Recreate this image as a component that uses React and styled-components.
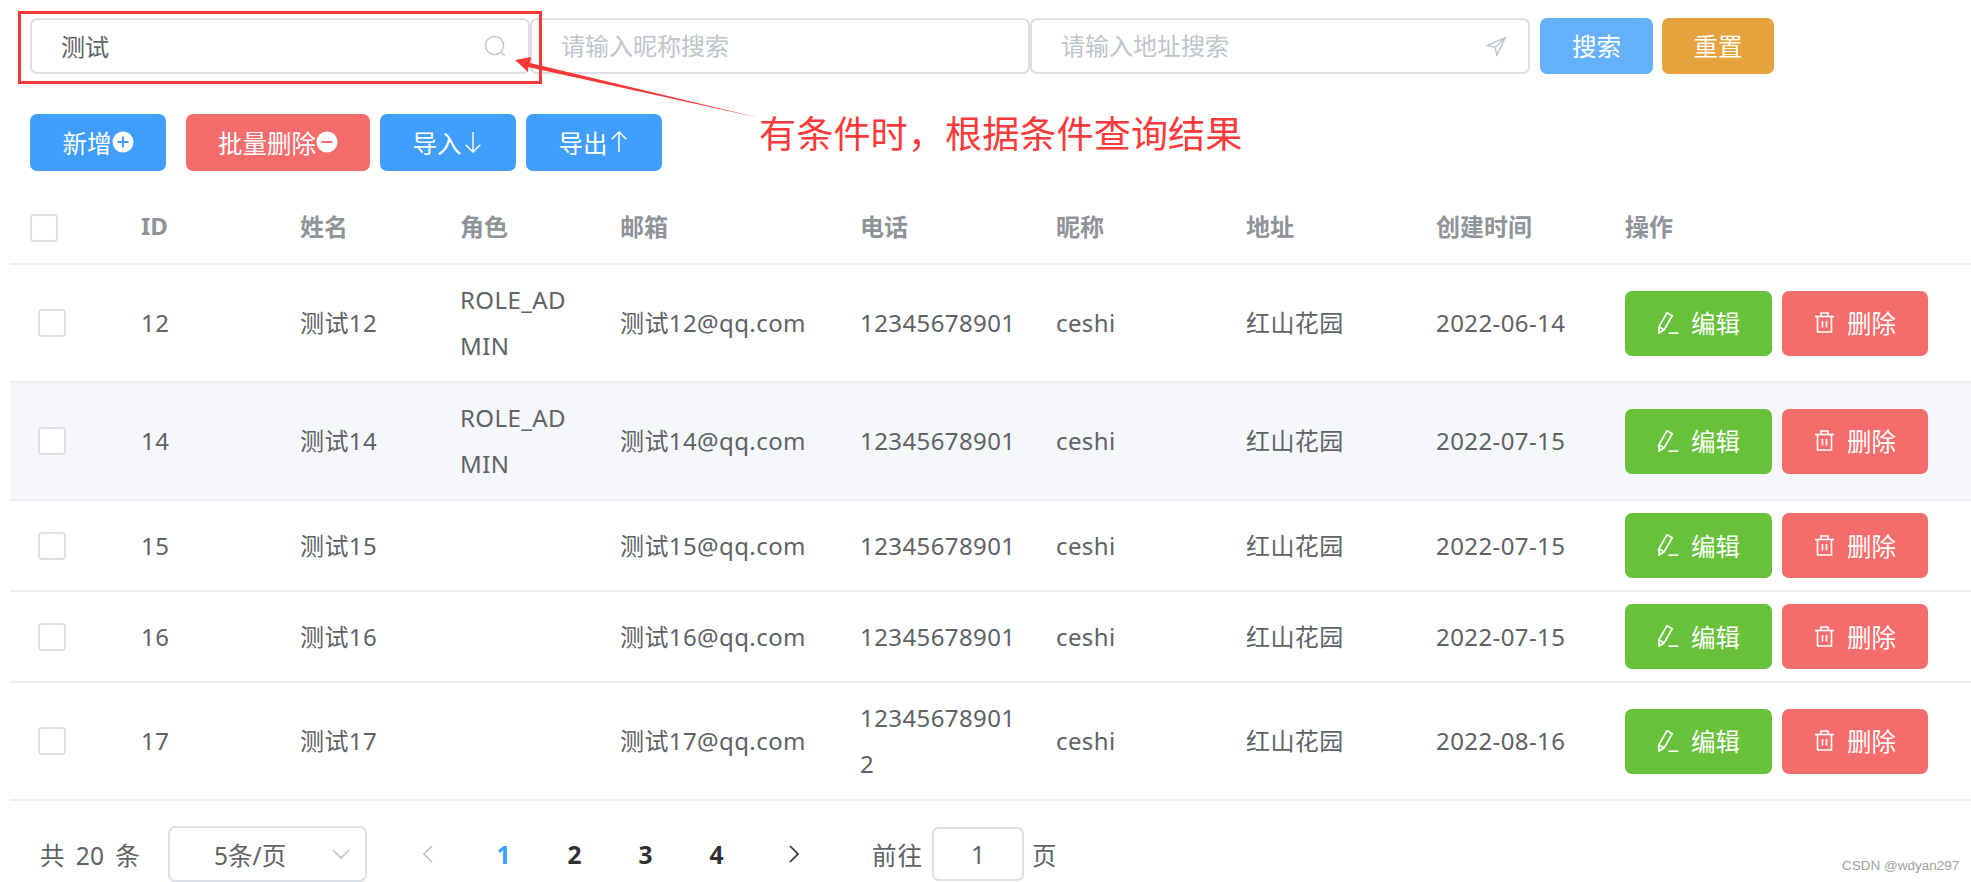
import React from 'react';
import styled, { createGlobalStyle } from 'styled-components';

const FONT = '"Noto Sans", "Noto Sans CJK SC", sans-serif';

const Global = createGlobalStyle`
  html, body { margin: 0; padding: 0; background: #fff; }
  body { font-family: ${FONT}; color: #606266; overflow: hidden; }
  * { box-sizing: border-box; }
  input::placeholder { color: #c0c4cc; opacity: 1; }
`;

const Page = styled.div`
  position: relative;
  width: 1971px;
  height: 882px;
  overflow: hidden;
  padding-top: 18px;
`;

const SearchBar = styled.div`
  display: flex;
  padding-left: 30px;
  height: 56px;
`;

const InputBox = styled.label`
  display: flex;
  align-items: center;
  width: 500px;
  height: 56px;
  border: 2px solid #dcdfe6;
  border-radius: 7px;
  padding: 0 21px 0 29px;
  background: #fff;
`;

const TextInput = styled.input`
  flex: 1;
  min-width: 0;
  border: 0;
  outline: 0;
  padding: 0 0 2px;
  background: transparent;
  font: 400 24px ${FONT};
  color: #606266;
`;

const Button = styled.button`
  display: inline-flex;
  align-items: center;
  justify-content: center;
  gap: ${p => p.$gap || 0}px;
  width: ${p => p.$w}px;
  height: ${p => p.$h || 57}px;
  margin-left: ${p => p.$ml || 0}px;
  padding: 0 0 1px;
  border: 0;
  border-radius: 7px;
  background: ${p => p.$bg};
  color: #fff;
  font: 400 24.5px ${FONT};
  white-space: nowrap;
`;

const ActionBar = styled.div`
  display: flex;
  padding-left: 30px;
  margin-top: 40px;
  height: 57px;
`;

const Table = styled.table`
  table-layout: fixed;
  border-collapse: separate;
  border-spacing: 0;
  width: 1961px;
  margin: 20px 0 0 10px;
  font-size: 24px;
`;

const Th = styled.th`
  height: 74px;
  padding: 0 0 4px 17px;
  text-align: left;
  font-weight: 700;
  color: #909399;
  border-bottom: 2px solid #ebeef5;
`;

const CheckTh = styled(Th)`
  padding: 2px 0 0 20px;
`;

const Td = styled.td`
  padding: 12px 17px;
  line-height: 46px;
  letter-spacing: 0.4px;
  color: #606266;
  word-break: break-all;
  border-bottom: 2px solid #ebeef5;
  background: ${p => (p.$hover ? '#f5f7fa' : '#fff')};
`;

const CheckCell = styled(Td)`
  padding: 0 0 0 28px;
`;

const Check = styled.span`
  display: block;
  width: 28px;
  height: 28px;
  background: #fff;
  border: 2px solid #dcdfe6;
  border-radius: 4px;
`;

const Actions = styled.div`
  display: flex;
  gap: 10px;
`;

const Pager = styled.div`
  display: flex;
  align-items: center;
  height: 56px;
  margin-top: 25px;
  padding-left: 40px;
  font-size: 24.5px;
  color: #606266;
`;

const Total = styled.span`
  width: 128px;
  white-space: nowrap;
  word-spacing: 5px;
`;

const Select = styled.div`
  display: flex;
  align-items: center;
  width: 199px;
  height: 56px;
  border: 2px solid #dcdfe6;
  border-radius: 7px;
  padding: 0 14px 0 44px;
  justify-content: space-between;
`;

const Pages = styled.div`
  display: flex;
  align-items: center;
  margin-left: 21px;
  width: 484px;
`;

const PageSlot = styled.span`
  display: flex;
  justify-content: center;
  width: 71px;
  font-weight: 700;
  color: ${p => (p.$active ? '#409eff' : '#303133')};
`;

const Arrow = styled.span`
  display: flex;
  justify-content: center;
  width: ${p => p.$w}px;
`;

const Jump = styled.span`
  white-space: nowrap;
  letter-spacing: 1px;
`;

const JumpInput = styled.div`
  display: flex;
  align-items: center;
  justify-content: center;
  width: 92px;
  height: 54px;
  margin: 0 8px 0 9px;
  border: 2px solid #dcdfe6;
  border-radius: 7px;
`;

const Mark = styled.div`
  position: absolute;
  left: 18px;
  top: 11px;
  width: 524px;
  height: 73px;
  border: 3px solid #f83737;
  pointer-events: none;
`;

const ArrowOverlay = styled.svg`
  position: absolute;
  left: 0;
  top: 0;
  pointer-events: none;
`;

const Note = styled.div`
  position: absolute;
  left: 759px;
  top: 107px;
  font-size: 37.2px;
  line-height: 54px;
  color: #fb3b3b;
  white-space: nowrap;
`;

const Watermark = styled.div`
  position: absolute;
  left: 1842px;
  top: 858px;
  font: 13.5px/16px "Liberation Sans", sans-serif;
  color: #a0a0a0;
  white-space: nowrap;
`;

const IconSlot = styled.span`
  display: flex;
  color: ${p => p.$color};
`;

const Stroke = ({ size = 24, children, w = 1.5, vb = 24 }) => (
  <svg width={size} height={size} viewBox={`0 0 ${vb} ${vb}`} fill="none" stroke="currentColor" strokeWidth={w}>
    {children}
  </svg>
);

const SearchIcon = () => (
  <IconSlot $color="#c0c4cc">
    <Stroke size={23}>
      <circle cx="11" cy="11" r="9.5" />
      <path d="M17.5 17.5L21.5 22" />
    </Stroke>
  </IconSlot>
);

const PlaneIcon = () => (
  <IconSlot $color="#c0c4cc">
    <Stroke size={22}>
      <path d="M22 3L2.5 11.5L11 13.5L13 22L22 3Z" />
      <path d="M11 13.5L22 3" />
    </Stroke>
  </IconSlot>
);

const CircleIcon = ({ plus, color }) => (
  <svg width="22" height="22" viewBox="0 0 22 22">
    <circle cx="11" cy="11" r="10.5" fill="#fff" />
    <path d={plus ? 'M5.5 11H16.5M11 5.5V16.5' : 'M5.5 11H16.5'} stroke={color} strokeWidth="2" />
  </svg>
);

const LineArrow = ({ up }) => (
  <Stroke size={22} w={1.6}>
    <path d={up ? 'M12 23V1M4 9L12 1L20 9' : 'M12 1V23M4 15L12 23L20 15'} />
  </Stroke>
);

const PencilIcon = () => (
  <Stroke size={22} w={1.6} vb={21}>
    <path d="M9.5 0.8L14.5 3.6L6.8 17L2 20L1.8 14.2Z" />
    <path d="M1.8 14.2L6.8 17" />
    <path d="M11 20.2H20.5" />
  </Stroke>
);

const TrashIcon = () => (
  <Stroke size={21} w={1.6} vb={21}>
    <path d="M1 4.5H20" />
    <path d="M7 4.5V1H14V4.5" />
    <path d="M3.5 4.5V20H17.5V4.5" />
    <path d="M8.5 9V15.5M12.5 9V15.5" />
  </Stroke>
);

const Chevron = ({ dir, color }) => {
  const d = { down: 'M2 6L10 14L18 6', left: 'M14 2L6 10L14 18', right: 'M6 2L14 10L6 18' }[dir];
  return (
    <IconSlot $color={color}>
      <Stroke size={20} w={1.7} vb={20}>
        <path d={d} />
      </Stroke>
    </IconSlot>
  );
};

const rows = [
  { id: 12, role: 'ROLE_ADMIN', phone: '12345678901', date: '2022-06-14' },
  { id: 14, role: 'ROLE_ADMIN', phone: '12345678901', date: '2022-07-15', hover: true },
  { id: 15, role: '', phone: '12345678901', date: '2022-07-15' },
  { id: 16, role: '', phone: '12345678901', date: '2022-07-15' },
  { id: 17, role: '', phone: '123456789012', date: '2022-08-16' },
];

const widths = [114, 159, 160, 160, 240, 196, 190, 190, 189, 363];
const heads = ['ID', '姓名', '角色', '邮箱', '电话', '昵称', '地址', '创建时间', '操作'];
const RED = '#f56c6c';

export default function App() {
  return (
    <Page>
      <Global />
      <SearchBar>
        <InputBox>
          <TextInput readOnly value="测试" />
          <SearchIcon />
        </InputBox>
        <InputBox>
          <TextInput readOnly placeholder="请输入昵称搜索" />
        </InputBox>
        <InputBox>
          <TextInput readOnly placeholder="请输入地址搜索" />
          <PlaneIcon />
        </InputBox>
        <Button $w={113} $h={56} $ml={10} $bg="#66b1ff">搜索</Button>
        <Button $w={112} $h={56} $ml={9} $bg="#e6a23c">重置</Button>
      </SearchBar>

      <ActionBar>
        <Button $w={136} $bg="#409eff">新增<CircleIcon plus color="#409eff" /></Button>
        <Button $w={184} $ml={20} $bg={RED}>批量删除<CircleIcon color={RED} /></Button>
        <Button $w={136} $ml={10} $bg="#409eff">导入<LineArrow /></Button>
        <Button $w={136} $ml={10} $bg="#409eff">导出<LineArrow up /></Button>
      </ActionBar>

      <Table>
        <colgroup>
          {widths.map((w, i) => <col key={i} style={{ width: w }} />)}
        </colgroup>
        <thead>
          <tr>
            <CheckTh><Check /></CheckTh>
            {heads.map(h => <Th key={h}>{h}</Th>)}
          </tr>
        </thead>
        <tbody>
          {rows.map(r => (
            <tr key={r.id}>
              <CheckCell $hover={r.hover}><Check /></CheckCell>
              <Td $hover={r.hover}>{r.id}</Td>
              <Td $hover={r.hover}>测试{r.id}</Td>
              <Td $hover={r.hover}>{r.role}</Td>
              <Td $hover={r.hover}>测试{r.id}@qq.com</Td>
              <Td $hover={r.hover}>{r.phone}</Td>
              <Td $hover={r.hover}>ceshi</Td>
              <Td $hover={r.hover}>红山花园</Td>
              <Td $hover={r.hover}>{r.date}</Td>
              <Td $hover={r.hover}>
                <Actions>
                  <Button $w={147} $h={65} $gap={12} $bg="#67c23a"><PencilIcon />编辑</Button>
                  <Button $w={146} $h={65} $gap={12} $bg={RED}><TrashIcon />删除</Button>
                </Actions>
              </Td>
            </tr>
          ))}
        </tbody>
      </Table>

      <Pager>
        <Total>共 20 条</Total>
        <Select>
          5条/页
          <Chevron dir="down" color="#c0c4cc" />
        </Select>
        <Pages>
          <Arrow $w={80}><Chevron dir="left" color="#c0c4cc" /></Arrow>
          <PageSlot $active>1</PageSlot>
          <PageSlot>2</PageSlot>
          <PageSlot>3</PageSlot>
          <PageSlot>4</PageSlot>
          <Arrow $w={84}><Chevron dir="right" color="#303133" /></Arrow>
        </Pages>
        <Jump>前往</Jump>
        <JumpInput>1</JumpInput>
        <Jump>页</Jump>
      </Pager>

      <Mark />
      <ArrowOverlay width="1971" height="882">
        <polygon points="515,60 531,57 530,63 760,118 528,67 528,72" fill="#f83737" />
      </ArrowOverlay>
      <Note>有条件时，根据条件查询结果</Note>
      <Watermark>CSDN @wdyan297</Watermark>
    </Page>
  );
}
